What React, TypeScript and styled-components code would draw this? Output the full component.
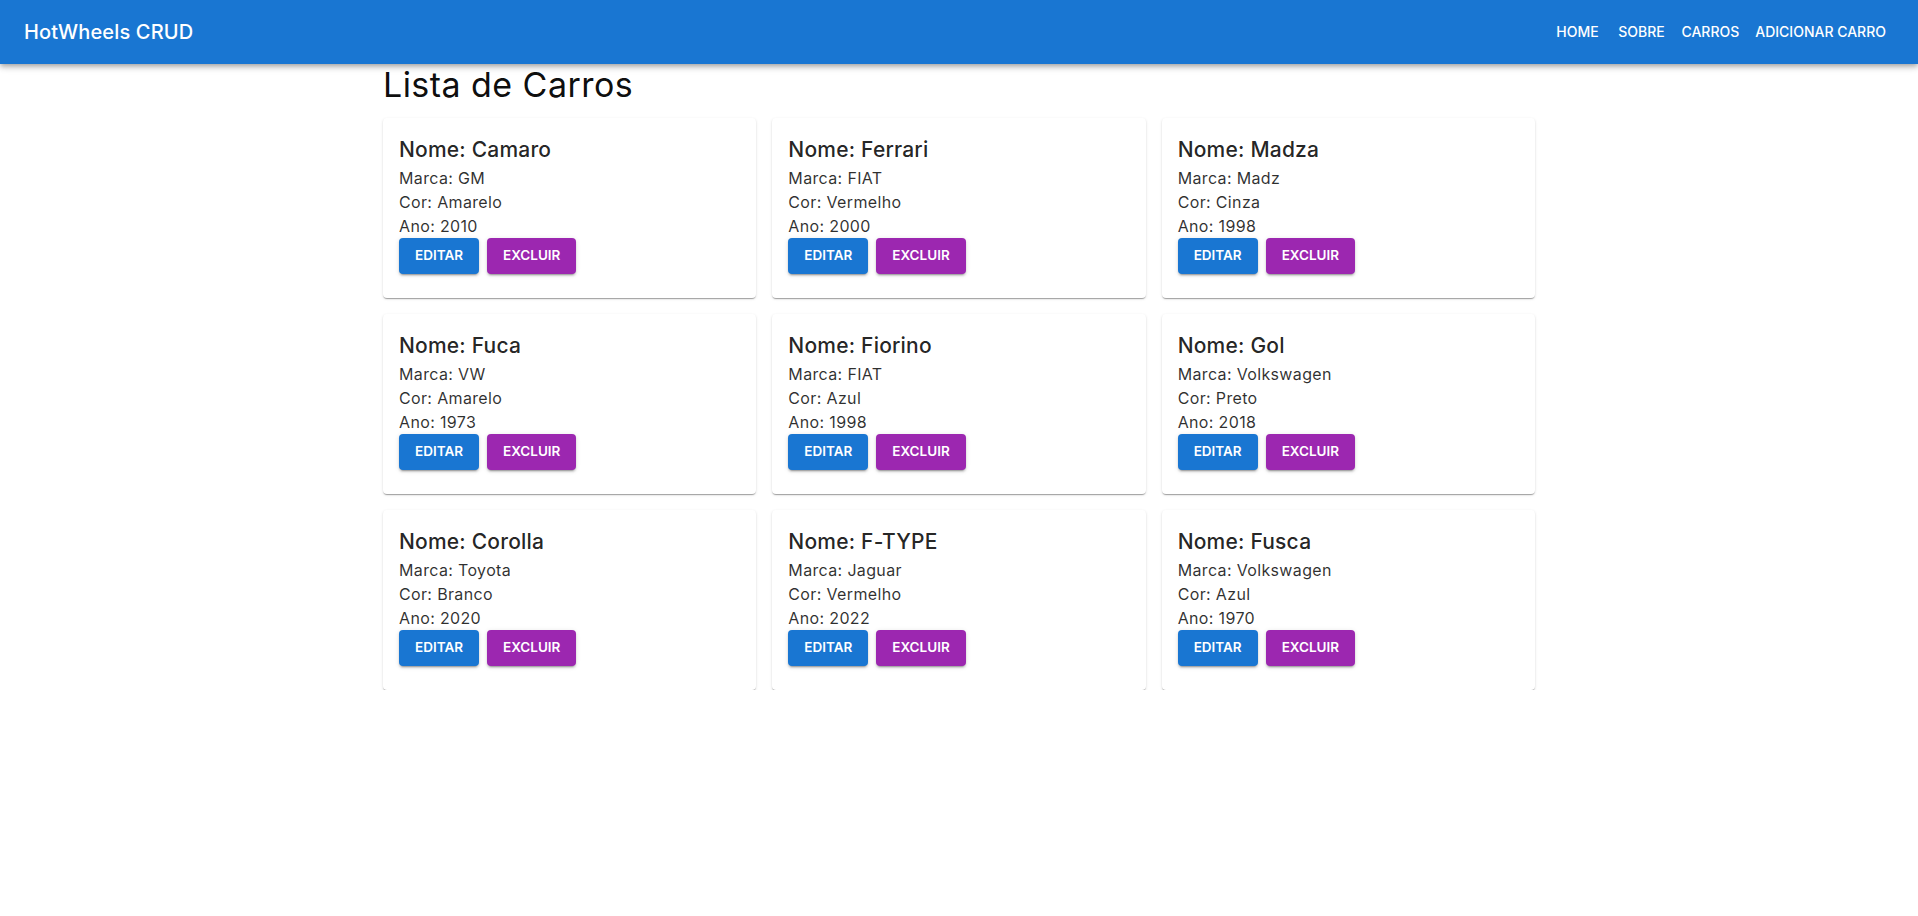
import React from "react";
import styled, { createGlobalStyle } from "styled-components";

const GlobalStyle = createGlobalStyle`
  * { box-sizing: border-box; }
  body {
    margin: 0;
    background: #fff;
    color: rgba(0, 0, 0, 0.87);
    font-family: Inter, "Open Sans", sans-serif;
    -webkit-font-smoothing: antialiased;
  }
`;

const AppBar = styled.header`
  background: #1976d2;
  color: #fff;
  box-shadow: 0px 2px 4px -1px rgba(0, 0, 0, 0.2), 0px 4px 5px 0px rgba(0, 0, 0, 0.14),
    0px 1px 10px 0px rgba(0, 0, 0, 0.12);
  position: relative;
  z-index: 2;
`;

const Toolbar = styled.div`
  display: flex;
  align-items: center;
  min-height: 64px;
  padding: 0 24px;
`;

const Brand = styled.div`
  flex: 1;
  font-size: 20px;
  font-weight: 500;
  letter-spacing: 0.15px;
  line-height: 1.6;
`;

const Nav = styled.nav`
  display: flex;
  align-items: center;
`;

const NavButton = styled.button`
  min-width: 64px;
  padding: 6px 8px;
  border: 0;
  background: transparent;
  color: #fff;
  font-family: inherit;
  font-size: 14px;
  font-weight: 500;
  line-height: 1.75;
  text-transform: uppercase;
  cursor: pointer;
  border-radius: 4px;
`;

const Container = styled.main`
  max-width: 1200px;
  margin: 0 auto;
  padding: 0 24px;
`;

const PageTitle = styled.h1`
  margin: 0 0 12px;
  font-size: 34px;
  font-weight: 400;
  line-height: 1.235;
  letter-spacing: 0.45px;
  color: rgba(0, 0, 0, 0.95);
`;

const Grid = styled.div`
  display: grid;
  grid-template-columns: repeat(3, 1fr);
  gap: 16px;
`;

const Card = styled.article`
  background: #fff;
  border-radius: 4px;
  box-shadow: 0px 2px 1px -1px rgba(0, 0, 0, 0.2), 0px 1px 1px 0px rgba(0, 0, 0, 0.14),
    0px 1px 3px 0px rgba(0, 0, 0, 0.12);
  padding: 16px 16px 24px;
`;

const CardTitle = styled.h2`
  margin: 0;
  font-size: 21px;
  font-weight: 500;
  line-height: 32px;
  letter-spacing: 0.2px;
  color: rgba(0, 0, 0, 0.87);
`;

const Field = styled.p`
  margin: 0;
  font-size: 16px;
  font-weight: 400;
  line-height: 24px;
  letter-spacing: 0.35px;
  color: rgba(0, 0, 0, 0.82);
`;

const Actions = styled.div`
  display: flex;
  gap: 8px;
`;

const ActionButton = styled.button<{ $variant: "primary" | "secondary" }>`
  min-width: 64px;
  height: 36px;
  padding: 6px 16px;
  border: 0;
  border-radius: 4px;
  background: ${(p) => (p.$variant === "primary" ? "#1976d2" : "#9c27b0")};
  color: #fff;
  font-family: inherit;
  font-size: 13.5px;
  font-weight: 600;
  line-height: 1.75;
  text-transform: uppercase;
  cursor: pointer;
  box-shadow: 0px 3px 1px -2px rgba(0, 0, 0, 0.2), 0px 2px 2px 0px rgba(0, 0, 0, 0.14),
    0px 1px 5px 0px rgba(0, 0, 0, 0.12);
`;

type Car = { nome: string; marca: string; cor: string; ano: number };

const cars: Car[] = [
  { nome: "Camaro", marca: "GM", cor: "Amarelo", ano: 2010 },
  { nome: "Ferrari", marca: "FIAT", cor: "Vermelho", ano: 2000 },
  { nome: "Madza", marca: "Madz", cor: "Cinza", ano: 1998 },
  { nome: "Fuca", marca: "VW", cor: "Amarelo", ano: 1973 },
  { nome: "Fiorino", marca: "FIAT", cor: "Azul", ano: 1998 },
  { nome: "Gol", marca: "Volkswagen", cor: "Preto", ano: 2018 },
  { nome: "Corolla", marca: "Toyota", cor: "Branco", ano: 2020 },
  { nome: "F-TYPE", marca: "Jaguar", cor: "Vermelho", ano: 2022 },
  { nome: "Fusca", marca: "Volkswagen", cor: "Azul", ano: 1970 },
];

export default function App() {
  return (
    <>
      <GlobalStyle />
      <AppBar>
        <Toolbar>
          <Brand>HotWheels CRUD</Brand>
          <Nav>
            <NavButton>Home</NavButton>
            <NavButton>Sobre</NavButton>
            <NavButton>Carros</NavButton>
            <NavButton>Adicionar Carro</NavButton>
          </Nav>
        </Toolbar>
      </AppBar>
      <Container>
        <PageTitle>Lista de Carros</PageTitle>
        <Grid>
          {cars.map((c) => (
            <Card key={c.nome}>
              <CardTitle>Nome: {c.nome}</CardTitle>
              <Field>Marca: {c.marca}</Field>
              <Field>Cor: {c.cor}</Field>
              <Field>Ano: {c.ano}</Field>
              <Actions>
                <ActionButton $variant="primary">Editar</ActionButton>
                <ActionButton $variant="secondary">Excluir</ActionButton>
              </Actions>
            </Card>
          ))}
        </Grid>
      </Container>
    </>
  );
}
